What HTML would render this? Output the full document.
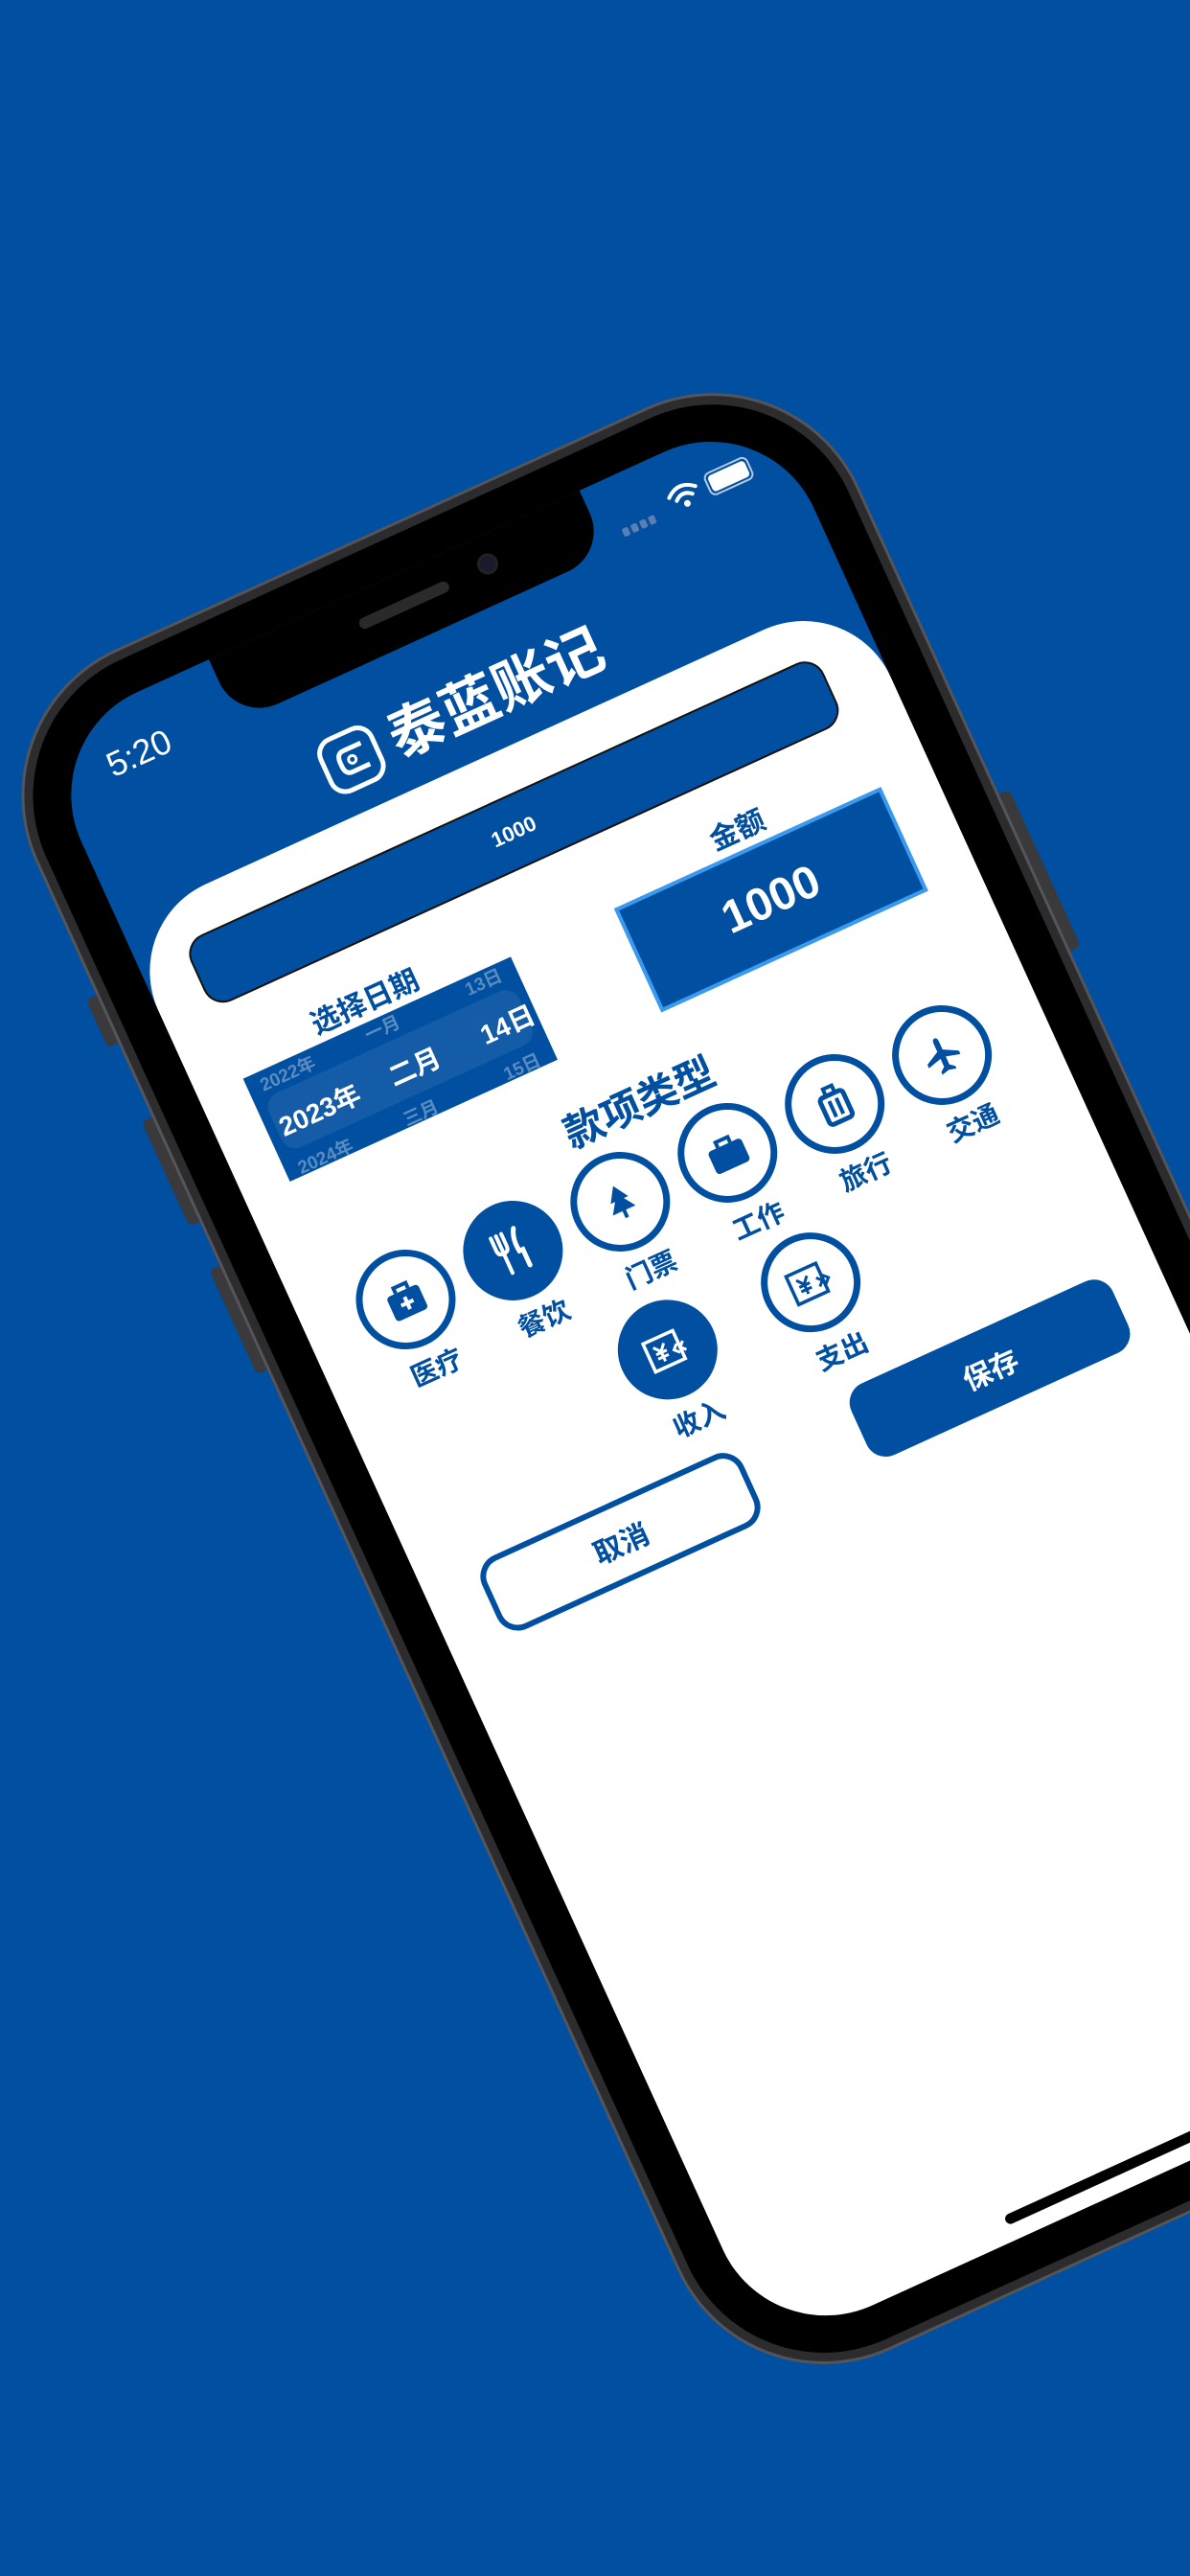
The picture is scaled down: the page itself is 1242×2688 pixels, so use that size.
<!DOCTYPE html>
<html><head><meta charset="utf-8"><style>
*{margin:0;padding:0;box-sizing:border-box}
html,body{width:1242px;height:2688px;overflow:hidden;background:#004fa0}
body{position:relative;font-family:"Liberation Sans","Noto Sans CJK SC",sans-serif}
#ph{position:absolute;left:36px;top:771px;width:840px;height:1850px;transform-origin:0 0;transform:rotate(-24.5deg)}
.abs{position:absolute}
.frame{left:-52px;top:-50px;width:944px;height:1950px;border-radius:168px;background:#2c2c2e;border:3px solid #555458}
.bez{left:-40px;top:-38px;width:920px;height:1926px;border-radius:156px;background:#000}
.scr{left:0;top:0;width:840px;height:1850px;border-radius:118px;background:#004fa0;overflow:hidden}
.card{left:0;top:212px;width:840px;height:1700px;background:#fff;border-radius:100px 100px 0 0}
.btn{background:#3a3a3c;border-radius:6px}
.c{display:flex;align-items:center;justify-content:center}
.lab{color:#004fa0;font-weight:bold;font-size:28px;width:140px;text-align:center}
.circ{width:104px;height:104px;border-radius:50%;border:7px solid #004fa0;background:#fff}
.circ.f{background:#004fa0}
.pk{color:#fff;font-weight:bold;position:absolute;white-space:nowrap}
.fd{color:rgba(255,255,255,.35);font-size:19px}
</style></head><body>
<div id="ph">
 <div class="abs btn" style="left:-64px;top:270px;width:16px;height:55px"></div>
 <div class="abs btn" style="left:-64px;top:410px;width:16px;height:120px"></div>
 <div class="abs btn" style="left:-64px;top:580px;width:16px;height:120px"></div>
 <div class="abs btn" style="left:888px;top:470px;width:16px;height:180px"></div>
 <div class="abs frame"></div>
 <div class="abs bez"></div>
 <div class="abs scr">
  <div class="abs card"></div>
  <div class="abs" style="left:58px;top:38px;color:#fff;font-size:36px">5:20</div>
  <div class="abs" style="left:200px;top:-10px;width:425px;height:82px;background:#000;border-radius:0 0 46px 46px"></div>
  <div class="abs" style="left:358px;top:27px;width:102px;height:12px;background:#2a2a2c;border-radius:6px"></div>
  <div class="abs" style="left:495px;top:19px;width:22px;height:22px;background:#1a1a2e;border-radius:50%;border:3px solid #222"></div>
  <div class="abs" style="left:648px;top:55px;display:flex;gap:3px"><i style="width:7px;height:9px;background:#5a7fb0;border-radius:2px"></i><i style="width:7px;height:9px;background:#5a7fb0;border-radius:2px"></i><i style="width:7px;height:9px;background:#5a7fb0;border-radius:2px"></i><i style="width:7px;height:9px;background:#5a7fb0;border-radius:2px"></i></div>
  <svg class="abs" style="left:704px;top:36px" width="36" height="28" viewBox="0 0 36 28"><path d="M3 10 Q18 -3 33 10" stroke="#fff" stroke-width="4" fill="none" stroke-linecap="round"/><path d="M9 16 Q18 8 27 16" stroke="#fff" stroke-width="4" fill="none" stroke-linecap="round"/><circle cx="18" cy="23" r="3.5" fill="#fff"/></svg>
  <div class="abs" style="left:748px;top:38px;width:50px;height:26px;border:2.5px solid rgba(255,255,255,.7);border-radius:7px;padding:2px"><div style="width:100%;height:100%;background:#fff;border-radius:4px"></div></div>
  <svg class="abs" style="left:258px;top:123px" width="68" height="68" viewBox="0 0 68 68"><rect x="5" y="5" width="58" height="58" rx="16" fill="none" stroke="#fff" stroke-width="5"/><path d="M50 22 H30 Q22 22 22 32 V36 Q22 46 30 46 H50" fill="none" stroke="#fff" stroke-width="5"/><circle cx="35" cy="34" r="4" fill="none" stroke="#fff" stroke-width="3"/></svg>
  <div class="abs" style="left:338px;top:122px;color:#fff;font-weight:bold;font-size:60px;line-height:70px">泰蓝账记</div>
  <div class="abs c" style="left:52px;top:258px;width:726px;height:76px;background:#004fa0;border:2px solid #111;border-radius:22px;color:#fff;font-weight:bold;font-size:22px">1000</div>
  <div class="abs" style="left:578px;top:366px;width:100px;text-align:center;color:#004fa0;font-weight:bold;font-size:30px">金额</div>
  <div class="abs c" style="left:477px;top:412px;width:306px;height:119px;background:#004fa0;border:4px solid #3a9af0;color:#fff;font-weight:bold;font-size:48px">1000</div>
  <div class="abs" style="left:120px;top:368px;width:160px;text-align:center;color:#004fa0;font-weight:bold;font-size:30px">选择日期</div>
  <div class="abs" style="left:51px;top:413px;width:307px;height:118px;background:#004fa0;overflow:hidden">
   <div class="abs" style="left:10px;top:28px;width:287px;height:62px;background:rgba(255,255,255,.08);border-radius:16px"></div>
   <div class="pk fd" style="left:14px;top:0px">2022年</div><div class="pk fd" style="left:135px;top:-2px">一月</div><div class="pk fd" style="left:250px;top:-2px">13日</div>
   <div class="pk" style="left:14px;top:42px;font-size:28px">2023年</div><div class="pk" style="left:140px;top:42px;font-size:28px">二月</div><div class="pk" style="left:245px;top:42px;font-size:28px">14日</div>
   <div class="pk fd" style="left:14px;top:95px">2024年</div><div class="pk fd" style="left:135px;top:95px">三月</div><div class="pk fd" style="left:250px;top:95px">15日</div>
  </div>
  <div class="abs" style="left:317px;top:574px;width:200px;text-align:center;color:#004fa0;font-weight:bold;font-size:42px">款项类型</div>
  <div class="abs circ c" style="left:58px;top:641px"><svg width="44" height="44" viewBox="0 0 44 44"><rect x="4" y="12" width="36" height="28" rx="4" fill="#004fa0"/><path d="M15 12 V6 H29 V12" fill="none" stroke="#004fa0" stroke-width="4"/><path d="M22 19 V33 M15 26 H29" stroke="#fff" stroke-width="4"/></svg></div>
  <div class="abs lab" style="left:40px;top:750px">医疗</div>
  <div class="abs circ f c" style="left:181px;top:641px"><svg width="44" height="50" viewBox="0 0 44 50"><path d="M6 4 V18 Q6 24 12 24 Q18 24 18 18 V4 M12 4 V46" stroke="#fff" stroke-width="4" fill="none" stroke-linecap="round"/><path d="M32 4 Q26 14 28 28 H32 V46" stroke="#fff" stroke-width="5" fill="none" stroke-linecap="round"/></svg></div>
  <div class="abs lab" style="left:163px;top:750px">餐饮</div>
  <div class="abs circ c" style="left:304px;top:641px"><svg width="40" height="44" viewBox="0 0 40 44"><path d="M20 4 L30 20 H25 L33 32 H22 V40 H18 V32 H7 L15 20 H10 Z" fill="#004fa0"/></svg></div>
  <div class="abs lab" style="left:286px;top:750px">门票</div>
  <div class="abs circ c" style="left:427px;top:641px"><svg width="44" height="40" viewBox="0 0 44 40"><rect x="3" y="11" width="38" height="26" rx="4" fill="#004fa0"/><path d="M15 11 V5 H29 V11" fill="none" stroke="#004fa0" stroke-width="4"/></svg></div>
  <div class="abs lab" style="left:409px;top:750px">工作</div>
  <div class="abs circ c" style="left:550px;top:641px"><svg width="36" height="46" viewBox="0 0 36 46"><rect x="5" y="12" width="26" height="30" rx="4" fill="none" stroke="#004fa0" stroke-width="5"/><path d="M13 12 V4 H23 V12 M14 18 V36 M22 18 V36" stroke="#004fa0" stroke-width="4" fill="none"/></svg></div>
  <div class="abs lab" style="left:532px;top:750px">旅行</div>
  <div class="abs circ c" style="left:673px;top:641px"><svg width="44" height="44" viewBox="0 0 44 44"><path d="M22 3 Q25 3 25 8 V17 L40 25 V29 L25 25 V34 L30 38 V41 L22 39 L14 41 V38 L19 34 V25 L4 29 V25 L19 17 V8 Q19 3 22 3 Z" fill="#004fa0"/></svg></div>
  <div class="abs lab" style="left:655px;top:750px">交通</div>
  <div class="abs circ f c" style="left:285px;top:802px"><svg width="50" height="44" viewBox="0 0 50 44"><rect x="4" y="6" width="34" height="32" fill="none" stroke="#fff" stroke-width="3.5"/><path d="M12 14 L18 21 L24 14 M18 21 V32 M12 22 H24 M12 27 H24" stroke="#fff" stroke-width="3" fill="none"/><path d="M36 20 L31 25 L36 30 M43 20 L38 25 L43 30" stroke="#fff" stroke-width="3" fill="none"/></svg></div>
  <div class="abs lab" style="left:267px;top:912px">收入</div>
  <div class="abs circ c" style="left:450px;top:800px"><svg width="50" height="44" viewBox="0 0 50 44"><rect x="4" y="6" width="34" height="32" fill="none" stroke="#004fa0" stroke-width="3.5"/><path d="M12 14 L18 21 L24 14 M18 21 V32 M12 22 H24 M12 27 H24" stroke="#004fa0" stroke-width="3" fill="none"/><path d="M32 20 L37 25 L32 30 M39 20 L44 25 L39 30" stroke="#004fa0" stroke-width="3" fill="none"/></svg></div>
  <div class="abs lab" style="left:432px;top:910px">支出</div>
  <div class="abs c" style="left:485px;top:970px;width:300px;height:82px;background:#004fa0;border-radius:22px;color:#fff;font-weight:bold;font-size:30px">保存</div>
  <div class="abs c" style="left:59px;top:974px;width:300px;height:84px;background:#fff;border:6px solid #004fa0;border-radius:24px;color:#004fa0;font-weight:bold;font-size:30px">取消</div>
  <div class="abs" style="left:281px;top:1822px;width:280px;height:11px;background:#000;border-radius:6px"></div>
 </div>
</div>
</body></html>
